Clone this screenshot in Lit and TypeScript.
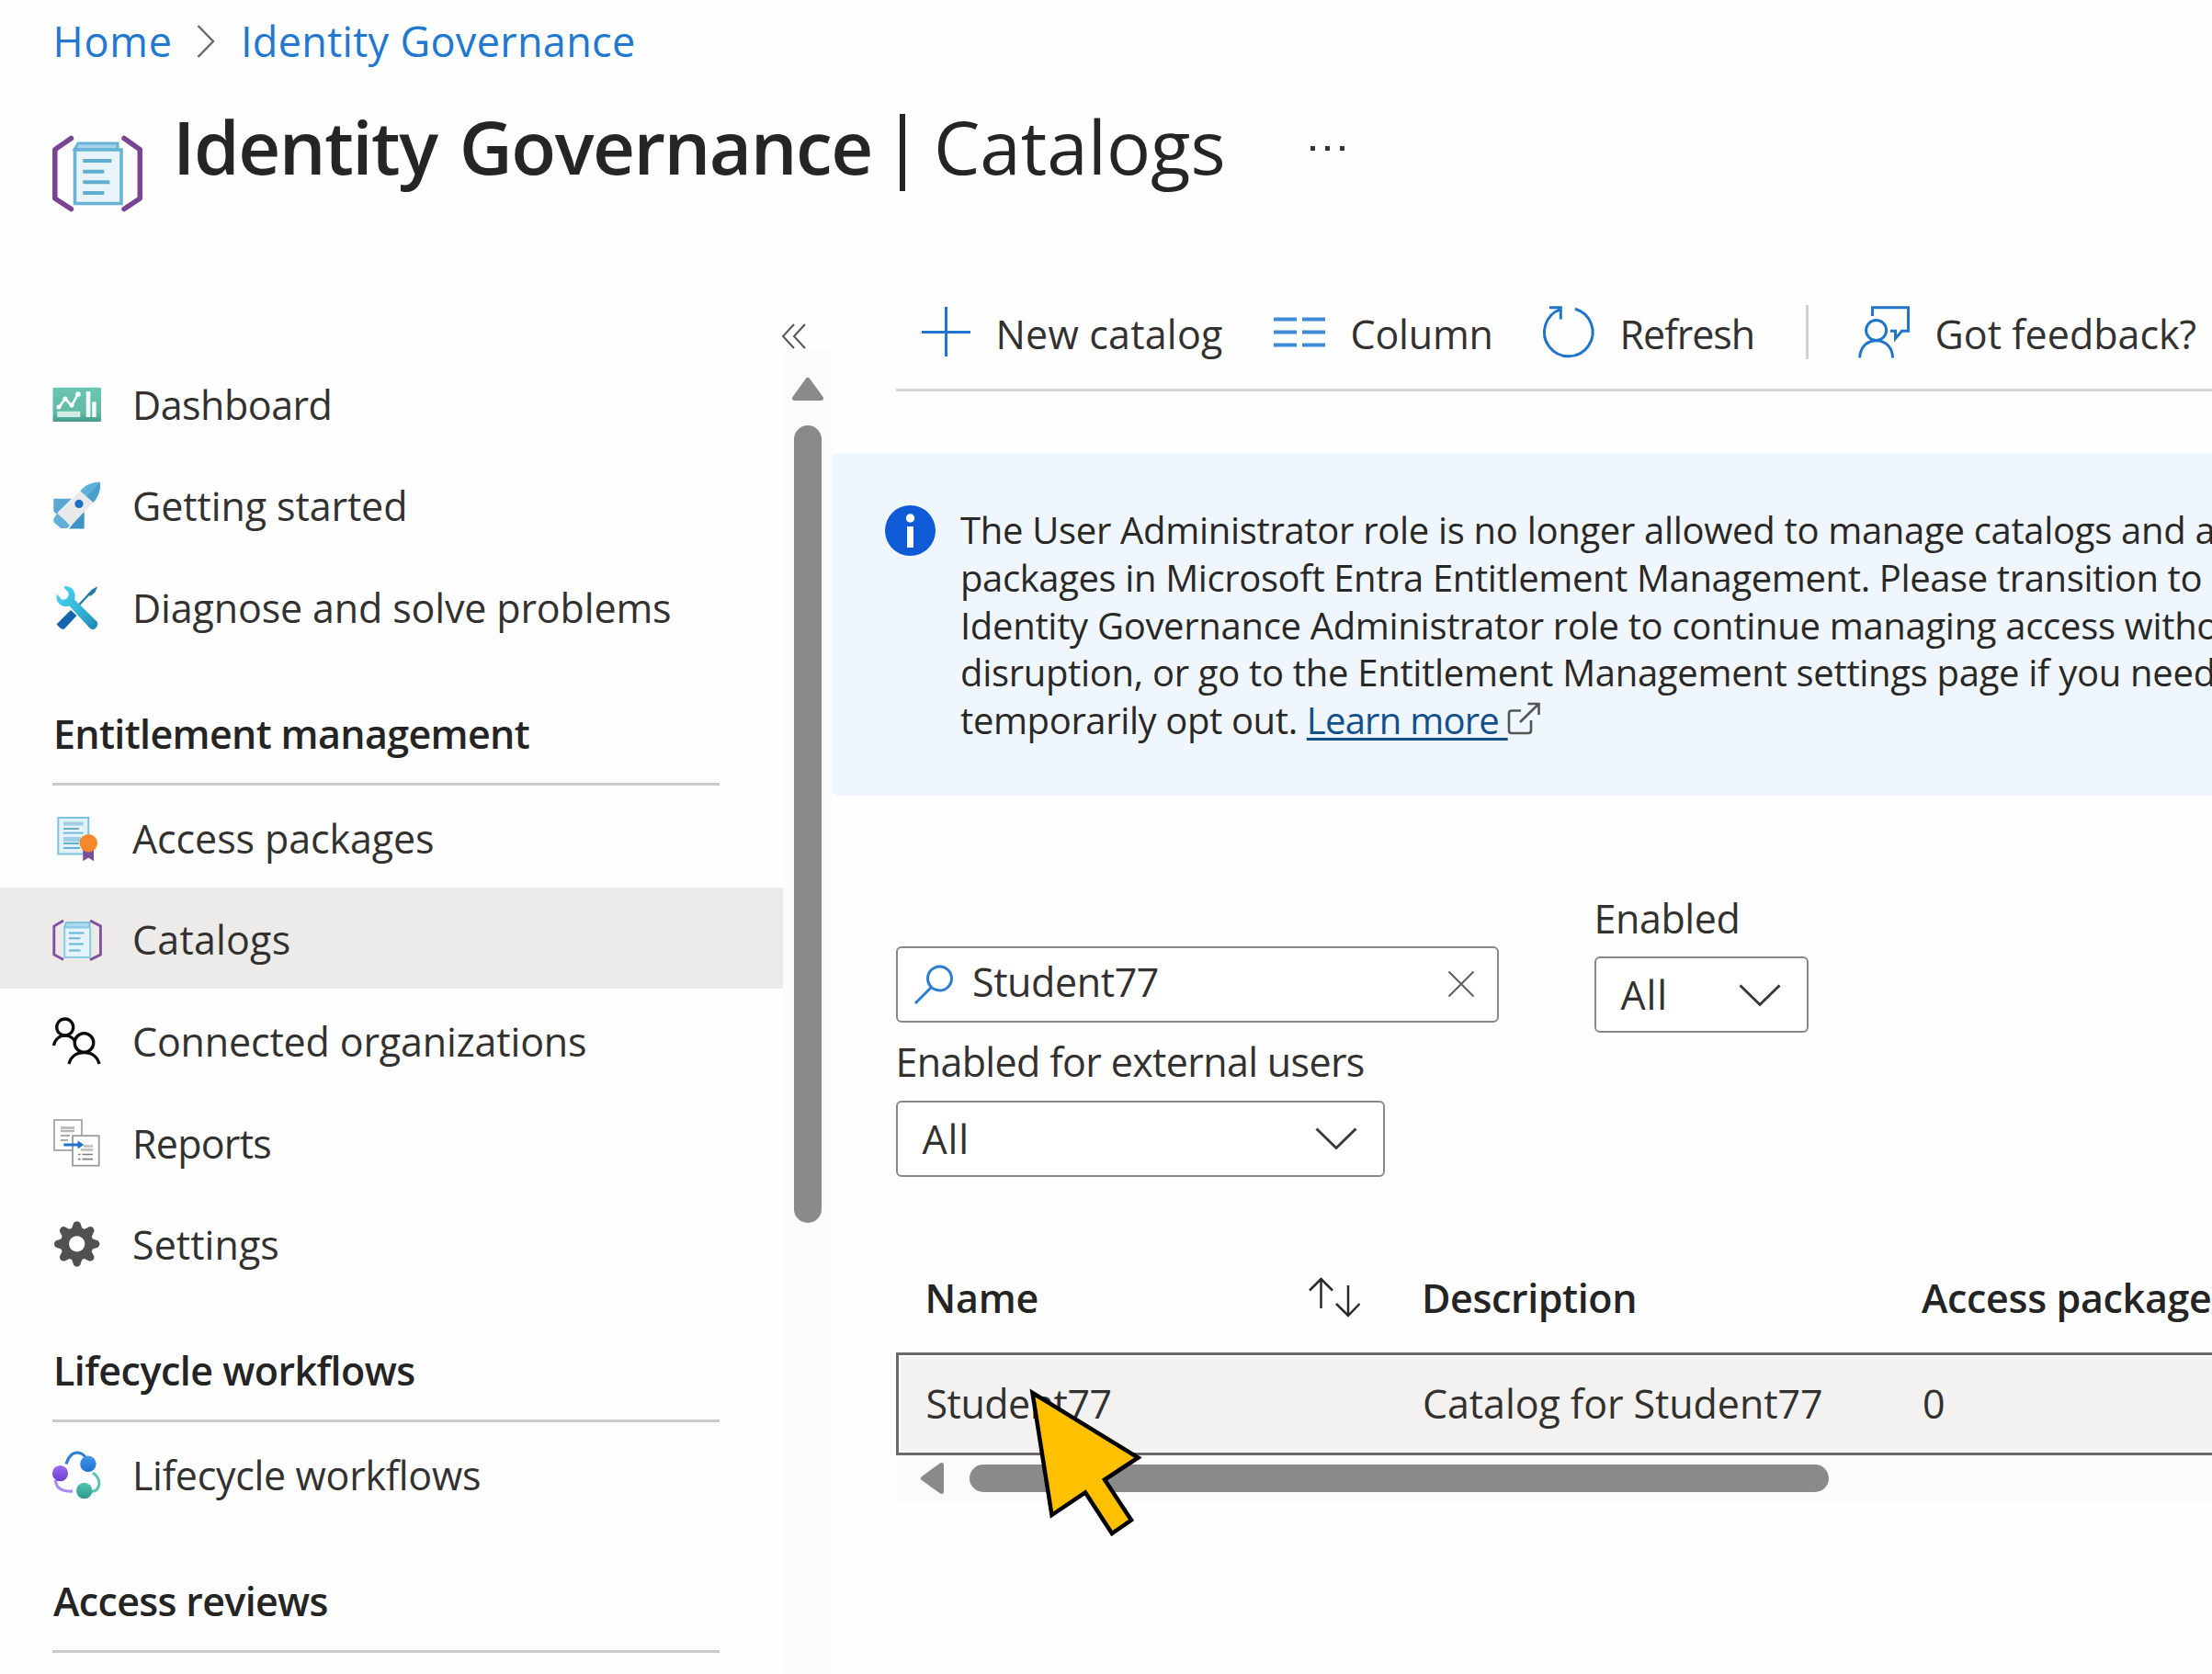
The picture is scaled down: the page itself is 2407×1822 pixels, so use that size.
import { LitElement, html, svg, css, nothing, TemplateResult } from "lit";
import { customElement, property } from "lit/decorators.js";
import { classMap } from "lit/directives/class-map.js";
import { styleMap } from "lit/directives/style-map.js";

type Label = { text: string; spacing: number };

interface NavItem extends Label {
  icon: TemplateResult;
  selected?: boolean;
}

interface NavGroup {
  heading?: Label;
  items: NavItem[];
}

/* ---------- icons ---------- */

const dashboardIcon = svg`
  <defs>
    <linearGradient id="dash" x1="0" y1="0" x2="0" y2="1">
      <stop offset="0" stop-color="#6bc7b2"/><stop offset=".75" stop-color="#5fb9a3"/><stop offset="1" stop-color="#46998a"/>
    </linearGradient>
  </defs>
  <rect x=".5" y="9.7" width="52.5" height="37.3" rx="1.5" fill="url(#dash)"/>
  <path d="M7 31.5 14 22l7 7.500L28 16.500" fill="none" stroke="#fff" stroke-width="2.600"/>
  <g fill="#fff"><circle cx="7" cy="31" r="2.500"/><circle cx="14" cy="22" r="2.600"/><circle cx="21" cy="29" r="2.600"/><circle cx="28" cy="17" r="2.800"/></g>
  <rect x="5.300" y="35.700" width="25" height="6.300" fill="#d3ece6"/>
  <rect x="36.700" y="14" width="4.700" height="28" fill="#f4fbf9"/>
  <rect x="43.200" y="25.300" width="4.500" height="16.700" fill="#f4fbf9"/>`;

const rocketIcon = svg`
  <path d="M1.300 20.700H21L4 37.500 1.300 34z" fill="#5aa7d3"/>
  <path d="M34.700 32V53.400H18z" fill="#3f93c4"/>
  <path d="M6 35.500 1.300 42.400V46L9 53h7l3-3z" fill="#62b0d8"/>
  <path d="M30.300 12.400 44.500 24.700 20.500 50 5.500 37z" fill="#e9e9ea"/>
  <path d="M30.300 12.400C36 5 44 2.500 52 2.700 52.500 11 50 19 44.500 24.700z" fill="#5fb1da"/>
  <path d="M52 2.700C52.500 11 50 19 44.500 24.700L37.500 18.600z" fill="#4a9fce"/>
  <circle cx="29" cy="26.400" r="4.600" fill="#1f6fc9"/>`;

const toolsIcon = svg`
  <defs>
    <linearGradient id="wr" x1="0" y1="0" x2="1" y2="1">
      <stop offset="0" stop-color="#4fd3ee"/><stop offset=".5" stop-color="#35b9dc"/><stop offset="1" stop-color="#1f86b0"/>
    </linearGradient>
  </defs>
  <path d="M27 27.500 41 12.500" stroke="#2a7aa4" stroke-width="2.400"/>
  <path d="M38.500 13.500 43 8.500 49.300 5.200 46.500 11.500 41.500 16z" fill="#2a7aa4"/>
  <path d="M20 31 26.500 37 13 51.500Q10.500 52.500 8.500 50.500L4.500 46.500z" fill="#1465ad"/>
  <path d="M13.500 5C19 4.500 24 8.500 24.500 14 24.600 16 24.500 18 24 19.500L48.500 43.500Q50.500 46.500 48 49.500L46 51.500Q43 53 40.500 50.500L18.500 26.500C12 28.500 5.500 25 4.500 18.500 4.300 16.500 4.600 15 5.200 13.800L10 19.500Q13 20.500 16 18 18.500 15 17.500 11.800L12.500 6.800z" fill="url(#wr)"/>`;

const packageIcon = svg`
  <rect x="6.300" y="6" width="33" height="39.500" fill="#e3f2f9" stroke="#7cc3df" stroke-width="2"/>
  <path d="M12 12.500H33.500" stroke="#9ccfe4" stroke-width="4"/>
  <path d="M12 18H29M12 22.600H33.500" stroke="#68b0d2" stroke-width="1.900"/>
  <path d="M12 29.500H31" stroke="#9ccfe4" stroke-width="5"/>
  <path d="M12 34H29M12 39H30" stroke="#68b0d2" stroke-width="1.900"/>
  <path d="M33.300 40H45V53.200L39.200 49.500 33.300 53.200z" fill="#7b4c9b"/>
  <circle cx="39.300" cy="33.700" r="9.700" fill="#f5882b"/>`;

const catalogIcon = svg`
  <path d="M12 8 1.800 14V45L12 50.600M41 8 52.400 14V45L41 50.600" fill="none" stroke="#80529f" stroke-width="2.900"/>
  <path d="M13 15.500 15 10H40.500V15.500z" fill="#a9d9ec" stroke="#6db9d8" stroke-width="1.600"/>
  <rect x="13.200" y="15.500" width="28" height="32.500" fill="#e2f3fb" stroke="#8ccbe4" stroke-width="2"/>
  <path d="M18 21.500H34.500M18 27.200H30.500M18 33.600H33.800M18 40.400H30.500" stroke="#6ab4d6" stroke-width="2"/>`;

const peopleIcon = svg`
  <g fill="none" stroke="#0a0a0a" stroke-width="3.300">
    <circle cx="13.700" cy="13" r="9"/>
    <path d="M1.400 33C3 26 8 22.200 13.700 22.200 19 22.200 22.500 24.500 25 29"/>
    <circle cx="34.500" cy="30" r="10.300"/>
    <path d="M18 53C20 45 26.500 40.500 34.500 40.500 42.500 40.500 49 45 51 53"/>
  </g>`;

const reportsIcon = svg`
  <rect x="2" y="3" width="30" height="33" fill="#fff" stroke="#a5a5a5" stroke-width="1.800"/>
  <path d="M9 11.500H24M9 15H24" stroke="#b5b5b5" stroke-width="2.400"/><path d="M9 20H19M9 25H17" stroke="#8c8c8c" stroke-width="1.700"/>
  <rect x="22" y="20.200" width="28.700" height="32.500" fill="#fff" stroke="#9a9a9a" stroke-width="1.800"/>
  <path d="M34 31.500H44M31 35.500H44" stroke="#bdbdbd" stroke-width="2.600"/><path d="M28 40.500H30.500M32.500 40.500H44M28 45.600H30.500M32.500 45.600H44" stroke="#7d7d7d" stroke-width="1.700"/>
  <path d="M12.300 30H29" stroke="#1f74c7" stroke-width="3"/><path d="M27.500 25.500 34.300 30 27.500 34.600z" fill="#1f74c7"/>`;

const gearIcon = svg`
  <g fill="#515151">
    <path fill-rule="evenodd" d="M26.700 9.900a18 18 0 1 0 .01 0zM26.700 19.300a8.600 8.600 0 1 1-.01 0z"/>
    ${[0, 45, 90, 135, 180, 225, 270, 315].map(
      (a) => svg`<path transform="rotate(${a} 26.700 27.900)" d="M20.700 12 23.200 4.800Q26.700 1.500 30.200 4.800L32.700 12z"/>`
    )}
  </g>`;

const workflowIcon = svg`
  <defs>
    <linearGradient id="wb" x1="0" y1="0" x2="0" y2="1"><stop offset="0" stop-color="#4596e8"/><stop offset="1" stop-color="#1f6fd0"/></linearGradient>
    <linearGradient id="wp" x1="0" y1="0" x2="0" y2="1"><stop offset="0" stop-color="#9b6cf0"/><stop offset="1" stop-color="#6b3bd0"/></linearGradient>
    <linearGradient id="wg" x1="0" y1="0" x2="0" y2="1"><stop offset="0" stop-color="#52c5b2"/><stop offset="1" stop-color="#2f9a8c"/></linearGradient>
  </defs>
  <g fill="none" stroke-width="3.200">
    <path d="M15 16.500C17 8.500 22 4 27 4 32 4 35 7 37 11" stroke="#2f7fd2"/>
    <path d="M3.500 34C3.500 42 10 46.500 22 46.200" stroke="#a98af0"/>
    <path d="M44 26C49 29.500 51.500 34 50.800 39 50 43.500 47 46.500 42 46.500" stroke="#5cc4b0"/>
  </g>
  <circle cx="38.900" cy="16.300" r="8.700" fill="url(#wb)"/>
  <circle cx="8.500" cy="26.700" r="8.600" fill="url(#wp)"/>
  <circle cx="34.700" cy="45.500" r="8.700" fill="url(#wg)"/>`;

/* ---------- data ---------- */

const NAV: NavGroup[] = [
  {
    items: [
      { text: "Dashboard", spacing: -0.5, icon: dashboardIcon },
      { text: "Getting started", spacing: -0.1, icon: rocketIcon },
      { text: "Diagnose and solve problems", spacing: -0.15, icon: toolsIcon },
    ],
  },
  {
    heading: { text: "Entitlement management", spacing: -0.65 },
    items: [
      { text: "Access packages", spacing: -0.1, icon: packageIcon },
      { text: "Catalogs", spacing: 0.2, icon: catalogIcon, selected: true },
      { text: "Connected organizations", spacing: -0.17, icon: peopleIcon },
      { text: "Reports", spacing: -0.75, icon: reportsIcon },
      { text: "Settings", spacing: 0.05, icon: gearIcon },
    ],
  },
  {
    heading: { text: "Lifecycle workflows", spacing: -0.52 },
    items: [{ text: "Lifecycle workflows", spacing: -0.32, icon: workflowIcon }],
  },
  { heading: { text: "Access reviews", spacing: -0.66 }, items: [] },
];

const tracked = (l: Label) =>
  html`<span style=${styleMap({ letterSpacing: `${l.spacing}px` })}>${l.text}</span>`;

const shared = css`
  :host {
    display: block;
    font-family: "Open Sans", "Noto Sans", sans-serif;
    font-size: 43px;
    color: #323130;
  }
  * { box-sizing: border-box; }
  svg { display: block; flex: none; overflow: visible; }
  span { white-space: pre; }
`;

/* ---------- side menu ---------- */

@customElement("side-menu")
export class SideMenu extends LitElement {
  static styles = [shared, css`
    :host { width: 905px; display: flex; flex-direction: column; }
    .collapse { height: 155px; display: flex; justify-content: flex-end; align-items: flex-end; padding: 0 27px 2px 0; flex: none; }
    .body { display: flex; flex: 1; min-height: 0; }
    nav { width: 852px; padding-top: 1px; }
    .item { height: 110.6px; display: flex; align-items: center; gap: 33px; padding: 1px 0 0 57px; }
    .item span { padding-top: 3px; }
    .item.selected { background: #edebe9; }
    .heading { height: 140.2px; margin: 0 69px 0 57px; padding: 54.5px 0 0 1px; line-height: 60px; border-bottom: 3px solid #cbcbcb; font-weight: 600; color: #242424; }
    .gutter { width: 53px; background: #fbfbfb; padding: 29px 0 0 10px; }
    .thumb { width: 30px; height: 868px; margin: 27px 0 0 2px; border-radius: 15px; background: #8a8a8a; }
  `];

  render() {
    return html`
      <div class="collapse">
        <svg width="28" height="28" viewBox="0 0 28 28" fill="none" stroke="#555" stroke-width="2">
          <path d="M14 1 2 14 14 27M26 1 14 14 26 27"/>
        </svg>
      </div>
      <div class="body">
        <nav>
          ${NAV.map((g) => html`
            ${g.heading ? html`<div class="heading">${tracked(g.heading)}</div>` : nothing}
            ${g.items.map((i) => html`
              <div class=${classMap({ item: true, selected: !!i.selected })}>
                <svg width="54" height="54" viewBox="0 0 54 54">${i.icon}</svg>
                ${tracked(i)}
              </div>`)}
          `)}
        </nav>
        <div class="gutter">
          <svg width="34" height="25" viewBox="0 0 34 25">
            <path d="M17 2.500 31.500 22.500H2.500z" fill="#8a8a8a" stroke="#8a8a8a" stroke-width="5" stroke-linejoin="round"/>
          </svg>
          <div class="thumb"></div>
        </div>
      </div>`;
  }
}

/* ---------- command bar ---------- */

@customElement("command-bar")
export class CommandBar extends LitElement {
  static styles = [shared, css`
    .bar { margin-left: 70px; height: 127px; padding-left: 25px; border-bottom: 3px solid #d4d4d4; display: grid; grid-template-columns: 386px 293px 286px 57px auto; align-items: center; }
    .cmd { display: flex; align-items: center; gap: 27.500px; }
    .cmd span { padding-top: 5px; line-height: 60px; }
    .sep { width: 3px; height: 59px; background: #d0d0d0; }
  `];

  render() {
    const c = "#1f74cc";
    return html`
      <div class="bar">
        <div class="cmd">
          <svg width="56" height="56" viewBox="0 0 56 56"><path d="M29.500 1V55M3 28.500H56" stroke=${c} stroke-width="3"/></svg>
          ${tracked({ text: "New catalog", spacing: 0.2 })}
        </div>
        <div class="cmd">
          <svg width="56" height="56" viewBox="0 0 56 56"><path d="M0 14.500H25M31 14.500H56M0 28.500H25M31 28.500H56M0 42.500H25M31 42.500H56" stroke="#3f8ad4" stroke-width="4"/></svg>
          ${tracked({ text: "Column", spacing: -0.2 })}
        </div>
        <div class="cmd">
          <svg width="56" height="56" viewBox="0 0 56 56" fill="none" stroke=${c} stroke-width="3">
            <path d="M35 3.200A26.300 26.300 0 1 1 19.300 3.600M7 1.700H19.300V14.500"/>
          </svg>
          ${tracked({ text: "Refresh", spacing: -1.0 })}
        </div>
        <div class="sep"></div>
        <div class="cmd">
          <svg width="56" height="56" viewBox="0 0 56 56" fill="none" stroke=${c} stroke-width="3">
            <path d="M15.500 11V1.700H54.500V27.300H47.500L40.500 35.500V27.300H35"/>
            <circle cx="19.600" cy="26.500" r="11"/>
            <path d="M1.700 56.500C2 45 9.500 37.700 19.600 37.700 29.700 37.700 37.300 45 37.600 56.500"/>
          </svg>
          ${tracked({ text: "Got feedback?", spacing: 0 })}
        </div>
      </div>`;
  }
}

/* ---------- info banner ---------- */

@customElement("info-banner")
export class InfoBanner extends LitElement {
  static styles = [shared, css`
    .banner { height: 372.500px; background: #eff6fd; border-radius: 8px 0 0 8px; padding: 57px 0 0 58px; display: flex; gap: 27px; overflow: hidden; }
    .text { font-size: 40px; line-height: 51.750px; letter-spacing: -0.31px; color: #292827; padding-top: 1.200px; }
    .line { display: flex; white-space: pre; }
    .tight { letter-spacing: -0.38px; }
    .link { color: #12508c; letter-spacing: -0.75px; text-decoration: underline; text-decoration-thickness: 3px; text-underline-offset: 4px; }
    .ext { margin: 6px 0 0 -1px; }
  `];

  render() {
    return html`
      <div class="banner">
        <svg width="55" height="55" viewBox="0 0 55 55">
          <circle cx="27.500" cy="27.500" r="27.500" fill="#0f5bd7"/>
          <circle cx="27.500" cy="14" r="4.700" fill="#fff"/>
          <path d="M27.500 23V46" stroke="#fff" stroke-width="7"/>
        </svg>
        <div class="text">
          <div class="line">The User Administrator role is no longer allowed to manage catalogs and a</div>
          <div class="line tight">packages in Microsoft Entra Entitlement Management. Please transition to</div>
          <div class="line">Identity Governance Administrator role to continue managing access witho</div>
          <div class="line">disruption, or go to the Entitlement Management settings page if you need</div>
          <div class="line tight">temporarily opt out. <span class="link">Learn more </span><svg class="ext" width="36" height="36" viewBox="0 0 36 36" fill="none" stroke="#555" stroke-width="2.600">
            <path d="M15 9.500H5Q2 9.500 2 12.500V31Q2 34 5 34H23Q26 34 26 31V20M14 22 34 2.500M22.500 2H34.500V14"/>
          </svg></div>
        </div>
      </div>`;
  }
}

/* ---------- dropdown ---------- */

@customElement("filter-dropdown")
export class FilterDropdown extends LitElement {
  @property() value = "";
  static styles = [shared, css`
    .box { height: 83px; border: 2.500px solid #8a8886; border-radius: 6px; background: #fff; display: flex; align-items: center; justify-content: space-between; padding: 0 28px 0 27px; }
    span { letter-spacing: 0.9px; }
  `];
  render() {
    return html`
      <div class="box">
        <span>${this.value}</span>
        <svg width="46" height="24" viewBox="0 0 46 24" fill="none" stroke="#3b3a39" stroke-width="3"><path d="M1.500 1.500 23 22.500 44.500 1.500"/></svg>
      </div>`;
  }
}

/* ---------- catalog list ---------- */

@customElement("catalog-list")
export class CatalogList extends LitElement {
  static styles = [shared, css`
    .filters { display: flex; gap: 104px; padding-left: 69.500px; }
    .left { width: 656px; padding-top: 164.500px; }
    .right { width: 233px; padding-top: 103.500px; }
    .search { height: 82.500px; border: 2.500px solid #8a8886; border-radius: 6px; background: #fff; display: flex; align-items: center; padding: 0 25px 0 18px; }
    .search span { flex: 1; padding: 0 0 5px 20.500px; }
    .label { line-height: 60px; }
    .left .label { margin: 13.800px 0 11.700px; }
    .right .label { padding-top: 1px; margin-bottom: 11px; }
    .external { width: 532px; }
    .table { margin: 70px 0 0 69.500px; }
    .head, .row { display: grid; grid-template-columns: 540.500px 544px auto; align-items: center; }
    .head { height: 121px; padding: 2px 0 0 32px; font-weight: 600; color: #242424; }
    .name { display: flex; align-items: center; justify-content: space-between; padding-right: 67px; }
    .row { height: 112px; padding: 0 0 1px 30px; border: 3px solid #6b6a68; border-right: 0; background: #f3f2f0; box-shadow: inset 2px 2px #fff, inset 0 -2px #fff; }
    .scroll { height: 51px; margin-top: 1px; background: #fbfbfb; display: flex; align-items: center; gap: 28px; padding: 0 0 2px 27.500px; }
    .thumb { width: 935px; height: 30px; border-radius: 15px; background: #8a8a8a; }
  `];

  render() {
    return html`
      <div class="filters">
        <div class="left">
          <div class="search">
            <svg width="43" height="43" viewBox="0 0 43 43" fill="none" stroke="#2b7cd3" stroke-width="3"><circle cx="27.500" cy="15" r="13"/><path d="M18.500 24.500 1 42"/></svg>
            ${tracked({ text: "Student77", spacing: -0.4 })}
            <svg width="28" height="28" viewBox="0 0 28 28" stroke="#605e5c" stroke-width="2"><path d="M.5.500 27.500 27.500M27.500.500.500 27.500"/></svg>
          </div>
          <div class="label">${tracked({ text: "Enabled for external users", spacing: -0.65 })}</div>
          <filter-dropdown class="external" value="All"></filter-dropdown>
        </div>
        <div class="right">
          <div class="label">${tracked({ text: "Enabled", spacing: -0.4 })}</div>
          <filter-dropdown value="All"></filter-dropdown>
        </div>
      </div>
      <div class="table">
        <div class="head">
          <div class="name">
            ${tracked({ text: "Name", spacing: -0.2 })}
            <svg width="56" height="44" viewBox="0 0 56 44" fill="none" stroke="#2b2a29" stroke-width="2.500">
              <path d="M13.500 34V2M1 14.500 13.500 2 26 14.500M43 9V42M30 29 43 42 55.500 29"/>
            </svg>
          </div>
          ${tracked({ text: "Description", spacing: -0.4 })}
          ${tracked({ text: "Access package", spacing: -0.34 })}
        </div>
        <div class="row">
          ${tracked({ text: "Student77", spacing: -0.5 })}
          ${tracked({ text: "Catalog for Student77", spacing: -0.08 })}
          <span>0</span>
        </div>
        <div class="scroll">
          <svg width="25" height="34" viewBox="0 0 25 34"><path d="M2.500 17 22.500 2.500V31.500z" fill="#8a8a8a" stroke="#8a8a8a" stroke-width="5" stroke-linejoin="round"/></svg>
          <div class="thumb"></div>
        </div>
      </div>`;
  }
}

/* ---------- page ---------- */

@customElement("app-root")
export class AppRoot extends LitElement {
  static styles = [shared, css`
    :host { position: relative; width: 2407px; height: 1822px; overflow: hidden; background: #fefefe; display: flex; flex-direction: column; }
    .crumbs { height: 89px; flex: none; display: flex; align-items: center; padding-left: 57.500px; font-size: 45px; color: #2178cf; }
    .crumbs svg { margin: 0 28px 0 26px; }
    .title { height: 138px; flex: none; display: flex; align-items: center; padding-left: 57px; font-size: 80px; line-height: 110px; color: #262524; }
    .title svg { margin-top: 62px; }
    .title span { padding-top: 1px; }
    .blade { font-weight: 600; letter-spacing: -1.5px; word-spacing: 5px; margin-left: 33px; }
    .bar { width: 6px; height: 84px; background: #262524; margin: 15px 31px 0 30px; }
    .more { display: flex; gap: 11px; margin: 7px 0 0 92px; }
    .more i { width: 5px; height: 5px; background: #333; }
    .body { flex: 1; min-height: 0; display: flex; }
    main { flex: 1; min-width: 0; padding-top: 72px; }
    info-banner { margin-top: 67px; }
    .pointer { position: absolute; left: 1115px; top: 1500px; }
  `];

  render() {
    return html`
      <div class="crumbs">
        ${tracked({ text: "Home", spacing: 0.8 })}
        <svg width="20" height="36" viewBox="0 0 20 36" fill="none" stroke="#666" stroke-width="2.400"><path d="M1.500 1 18 18 1.500 35"/></svg>
        ${tracked({ text: "Identity Governance", spacing: 0.32 })}
      </div>
      <div class="title">
        <svg width="98" height="82" viewBox="0 0 98 82">
          <path d="M20.500 2.500 2.800 14.700V68L20.500 79.500M78 2.500 95.300 14.700V68L78 79.500" fill="none" stroke="#774594" stroke-width="5.500" stroke-linecap="round" stroke-linejoin="round"/>
          <path d="M24 15 28 8H71V15z" fill="#a7d3ea" stroke="#68b4d4" stroke-width="3"/>
          <rect x="24.500" y="15" width="50.500" height="58.500" fill="#e9f3fa" stroke="#68b4d4" stroke-width="3.600"/>
          <path d="M33.300 27H64.400M33.300 38.700H56.300M33.300 50.300H62.300M33.300 62H56.300" stroke="#5fadd0" stroke-width="4"/>
        </svg>
        <span class="blade">Identity Governance</span>
        <div class="bar"></div>
        <span>Catalogs</span>
        <div class="more"><i></i><i></i><i></i></div>
      </div>
      <div class="body">
        <side-menu></side-menu>
        <main>
          <command-bar></command-bar>
          <info-banner></info-banner>
          <catalog-list></catalog-list>
        </main>
      </div>
      <svg class="pointer" width="134" height="176" viewBox="1115 1500 134 176">
        <path d="M1123.500 1516 1238.500 1586.500 1202 1610.500 1231 1654.500 1210 1669 1181 1624.500 1144.500 1649z" fill="#ffc000" stroke="#000" stroke-width="4.500" stroke-miterlimit="10"/>
      </svg>`;
  }
}
